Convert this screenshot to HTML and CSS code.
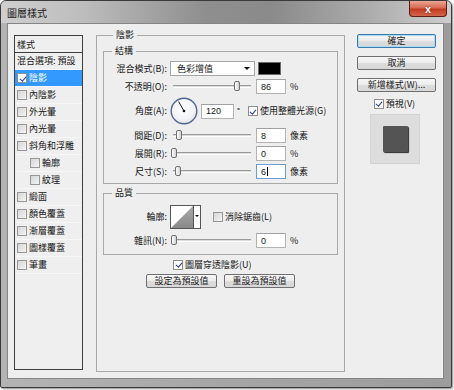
FILE: index.html
```html
<!DOCTYPE html>
<html lang="zh-Hant">
<head>
  <meta charset="utf-8">
  <title>圖層樣式</title>
  <link rel="stylesheet" href="styles.css">
</head>
<body>
  <div class="window">
    <div class="titlebar">
      <span class="title">圖層樣式</span>
      <button class="close-btn" aria-label="關閉">x</button>
    </div>
    <div class="frame">
      <div class="client">

        <div class="sidebar">
          <div class="side-head">樣式</div>
          <div class="side-item">混合選項: 預設</div>
          <div class="side-item selected"><span class="cb on"></span>陰影</div>
          <div class="side-item"><span class="cb"></span>內陰影</div>
          <div class="side-item"><span class="cb"></span>外光暈</div>
          <div class="side-item"><span class="cb"></span>內光暈</div>
          <div class="side-item"><span class="cb"></span>斜角和浮雕</div>
          <div class="side-item sub"><span class="cb"></span>輪廓</div>
          <div class="side-item sub"><span class="cb"></span>紋理</div>
          <div class="side-item"><span class="cb"></span>緞面</div>
          <div class="side-item"><span class="cb"></span>顏色覆蓋</div>
          <div class="side-item"><span class="cb"></span>漸層覆蓋</div>
          <div class="side-item"><span class="cb"></span>圖樣覆蓋</div>
          <div class="side-item"><span class="cb"></span>筆畫</div>
        </div>

        <fieldset class="group main-group">
          <legend>陰影</legend>

          <fieldset class="group sub-group structure">
            <legend>結構</legend>

            <div class="row">
              <span class="lbl">混合模式(B):</span>
              <div class="select"><span>色彩增值</span><span class="arrow"></span></div>
              <span class="swatch"></span>
            </div>

            <div class="row">
              <span class="lbl">不透明(O):</span>
              <div class="slider"><div class="track"></div><span class="thumb" style="left: 67px"></span></div>
              <span class="field">86</span>
              <span class="unit">%</span>
            </div>

            <div class="row angle-row">
              <span class="lbl">角度(A):</span>
              <svg class="dial" width="28" height="28" viewBox="0 0 28 28">
                <defs>
                  <radialGradient id="dialFill" cx="45%" cy="40%" r="65%">
                    <stop offset="0" stop-color="#ffffff"/>
                    <stop offset="0.7" stop-color="#f1f2f5"/>
                    <stop offset="1" stop-color="#d9dce4"/>
                  </radialGradient>
                </defs>
                <circle cx="14" cy="14" r="12.8" fill="url(#dialFill)" stroke="#53668f" stroke-width="1.4"/>
                <line x1="14" y1="14" x2="8.6" y2="4.6" stroke="#111" stroke-width="1"/>
                <circle cx="14" cy="14" r="1.3" fill="#111"/>
              </svg>
              <span class="field angle-field">120</span>
              <span class="degree">°</span>
              <span class="cb on global-cb"></span>
              <span class="cb-text">使用整體光源(G)</span>
            </div>

            <div class="row">
              <span class="lbl">間距(D):</span>
              <div class="slider"><div class="track"></div><span class="thumb" style="left: 9px"></span></div>
              <span class="field">8</span>
              <span class="unit">像素</span>
            </div>

            <div class="row">
              <span class="lbl">展開(R):</span>
              <div class="slider"><div class="track"></div><span class="thumb" style="left: 4px"></span></div>
              <span class="field">0</span>
              <span class="unit">%</span>
            </div>

            <div class="row">
              <span class="lbl">尺寸(S):</span>
              <div class="slider"><div class="track"></div><span class="thumb" style="left: 8px"></span></div>
              <span class="field focused">6<span class="caret"></span></span>
              <span class="unit">像素</span>
            </div>
          </fieldset>

          <fieldset class="group sub-group quality">
            <legend>品質</legend>

            <div class="row contour-row">
              <span class="lbl">輪廓:</span>
              <div class="contour">
                <svg class="contour-curve" width="22" height="22" viewBox="0 0 22 22">
                  <defs>
                    <linearGradient id="contourFill" x1="0" y1="0" x2="0" y2="1">
                      <stop offset="0" stop-color="#a8a8a8"/>
                      <stop offset="1" stop-color="#8a8a8a"/>
                    </linearGradient>
                  </defs>
                  <rect width="22" height="22" fill="#fff"/>
                  <polygon points="0,22 22,0 22,22" fill="url(#contourFill)"/>
                </svg>
                <span class="contour-drop"><span class="arrow small"></span></span>
              </div>
              <span class="cb aa-cb"></span>
              <span class="cb-text">消除鋸齒(L)</span>
            </div>

            <div class="row">
              <span class="lbl">雜訊(N):</span>
              <div class="slider"><div class="track"></div><span class="thumb" style="left: 4px"></span></div>
              <span class="field">0</span>
              <span class="unit">%</span>
            </div>
          </fieldset>

          <div class="knockout-row">
            <span class="cb on"></span>
            <span class="cb-text">圖層穿透陰影(U)</span>
          </div>

          <div class="default-row">
            <button class="btn">設定為預設值</button>
            <button class="btn">重設為預設值</button>
          </div>
        </fieldset>

        <div class="actions">
          <button class="btn btn-default">確定</button>
          <button class="btn">取消</button>
          <button class="btn">新增樣式(W)...</button>
          <div class="preview-toggle">
            <span class="cb on"></span>
            <span class="cb-text">預視(V)</span>
          </div>
          <div class="preview-box">
            <div class="preview-square"></div>
          </div>
        </div>

      </div>
    </div>
  </div>
</body>
</html>
```

FILE: styles.css
```css
* {
  box-sizing: border-box;
}

body {
  margin: 0;
  width: 454px;
  height: 390px;
  background: #ffffff;
  font-family: "Noto Sans CJK TC", "Liberation Sans", sans-serif;
  font-size: 9px;
  line-height: 12px;
  color: #161616;
}

.window {
  width: 452px;
  height: 388px;
  border: 1px solid #3a3a3a;
  border-radius: 6px 6px 2px 2px;
  background: linear-gradient(90deg, #b4b4b4, #a6a6a6 50%, #9c9c9c);
  box-shadow: 1px 1px 2px rgba(0, 0, 0, 0.45);
  overflow: hidden;
}

.titlebar {
  height: 22px;
  display: flex;
  justify-content: space-between;
  align-items: flex-start;
  padding: 0 4px 0 6px;
  background: linear-gradient(90deg, #cfcfcf, #bdbdbd 18%, #8f8f8f 45%, #8a8a8a 60%, #a9a9a9 80%, #cdcdcd);
}

.title {
  padding-top: 6px;
  font-size: 10px;
  color: #1a1a1a;
}

.close-btn {
  width: 38px;
  height: 16px;
  margin: 0;
  padding: 0;
  border: 1px solid #5e1d12;
  border-top: none;
  border-radius: 0 0 4px 4px;
  background: linear-gradient(#e9a797, #d86a52 45%, #c23a22 55%, #d2664c);
  color: #ffffff;
  font-family: "Liberation Sans", sans-serif;
  font-size: 11px;
  font-weight: bold;
  line-height: 14px;
  text-shadow: 0 0 2px #6b1f10;
}

.frame {
  padding: 0 7px 7px 6px;
}

.client {
  width: 437px;
  height: 356px;
  border: 1px solid #858585;
  background: #eeeeee;
  display: flex;
  align-items: flex-start;
  padding: 11px 0 0 6px;
}

/* left style list */
.sidebar {
  width: 69px;
  height: 335px;
  flex-shrink: 0;
  border: 1px solid #3e3e3e;
  background: #efefef;
}

.side-head {
  height: 17px;
  padding: 3px 0 0 2px;
  border-bottom: 1px solid #3e3e3e;
}

.side-item {
  height: 17px;
  display: flex;
  align-items: center;
  padding-left: 2px;
  border-bottom: 1px solid #f7f7f7;
  white-space: nowrap;
}

.side-item.sub {
  padding-left: 15px;
}

.side-item.selected {
  background: #3399ff;
  color: #ffffff;
}

.side-item .cb {
  margin-right: 2px;
}

/* checkboxes */
.cb {
  position: relative;
  display: inline-block;
  width: 10px;
  height: 10px;
  flex-shrink: 0;
  border: 1px solid #979797;
  background: linear-gradient(135deg, #d6d6d6, #f4f4f4);
}

.cb.on {
  border-color: #8e8f8f;
  background: #ffffff;
}

.cb.on::after {
  content: "";
  position: absolute;
  left: 2.5px;
  top: 0.5px;
  width: 2.5px;
  height: 5px;
  border-right: 1.5px solid #21409a;
  border-bottom: 1.5px solid #21409a;
  transform: rotate(40deg);
}

.cb-text {
  margin-left: 2px;
  white-space: nowrap;
}

/* fieldsets */
.group {
  margin: 0;
  border: 1px solid #a9a9a9;
  min-width: 0;
}

.group legend {
  padding: 0 3px;
  line-height: 12px;
}

.main-group {
  width: 249px;
  height: 343px;
  margin-left: 13px;
  margin-top: -6px;
  padding: 4px 6px 0 6px;
}

.main-group > legend {
  margin-left: 10px;
}

.sub-group {
  width: 235px;
  padding: 4px 4px 4px 0;
}

.sub-group > legend {
  margin-left: 8px;
}

.structure {
  display: flex;
  flex-direction: column;
  gap: 3px;
}

.quality {
  margin-top: 3px;
  padding-top: 6px;
  padding-bottom: 6px;
  display: flex;
  flex-direction: column;
  gap: 4px;
}

.row {
  display: flex;
  align-items: center;
  height: 15px;
}

.lbl {
  width: 63px;
  margin-right: 3px;
  text-align: right;
  white-space: nowrap;
}

.select {
  width: 85px;
  height: 15px;
  display: flex;
  justify-content: space-between;
  align-items: center;
  padding: 0 4px 0 6px;
  border: 1px solid #a7a7a7;
  background: #ffffff;
}

.arrow {
  width: 0;
  height: 0;
  border-left: 3px solid transparent;
  border-right: 3px solid transparent;
  border-top: 3px solid #111111;
}

.arrow.small {
  border-left-width: 2px;
  border-right-width: 2px;
  border-top-width: 2px;
}

.swatch {
  width: 23px;
  height: 13px;
  margin-left: 3px;
  border: 1px solid #6a6a6a;
  background: #000000;
}

.slider {
  position: relative;
  width: 84px;
  height: 15px;
}

.track {
  margin: 6px 3px 0;
  height: 3px;
  border-top: 1px solid #9a9a9a;
  border-bottom: 1px solid #ffffff;
  background: #dcdcdc;
}

.thumb {
  position: absolute;
  top: 2px;
  width: 6px;
  height: 10px;
  margin-left: -3px;
  border: 1px solid #6f6f6f;
  border-radius: 2px;
  background: linear-gradient(90deg, #ffffff, #d2d2d2);
}

.field {
  width: 30px;
  height: 15px;
  margin-left: 2px;
  padding-left: 4px;
  border: 1px solid #b3b3b3;
  border-top-color: #a0a0a0;
  background: #ffffff;
  display: flex;
  align-items: center;
  font-family: "Liberation Sans", sans-serif;
  font-size: 9px;
}

.field.focused {
  border-color: #6b9bd6;
}

.caret {
  width: 1px;
  height: 9px;
  margin-left: 1px;
  background: #000000;
}

.unit {
  margin-left: 4px;
  white-space: nowrap;
}

.angle-row {
  height: 28px;
}

.dial {
  flex-shrink: 0;
}

.angle-field {
  width: 33px;
  margin-left: 3px;
}

.degree {
  margin-left: 3px;
  font-size: 8px;
}

.global-cb {
  margin-left: 8px;
}

.contour-row {
  height: 24px;
}

.contour {
  width: 31px;
  height: 24px;
  display: flex;
  border: 1px solid #555555;
  background: #ffffff;
}

.contour-curve {
  display: block;
}

.contour-drop {
  width: 7px;
  border-left: 1px solid #555555;
  display: flex;
  justify-content: center;
  padding-top: 9px;
}

.aa-cb {
  margin-left: 12px;
}

.knockout-row {
  display: flex;
  align-items: center;
  height: 11px;
  margin: 4px 0 0 70px;
}

.default-row {
  display: flex;
  justify-content: center;
  gap: 7px;
  margin-top: 4px;
}

/* buttons */
.btn {
  height: 14px;
  margin: 0;
  padding: 0;
  border: 1px solid #6f6f6f;
  border-radius: 2px;
  background: linear-gradient(#f7f7f7, #ececec 48%, #dcdcdc 52%, #d8d8d8);
  font-family: inherit;
  font-size: 9px;
  line-height: 12px;
  color: #1c1c1c;
}

.default-row .btn {
  width: 71px;
}

.actions {
  width: 79px;
  margin-left: 12px;
  margin-top: -1px;
  display: flex;
  flex-direction: column;
  align-items: stretch;
}

.actions .btn {
  margin-bottom: 8px;
}

.btn-default {
  border-color: #3d7bad;
  box-shadow: inset 0 0 0 1px #a6dcf5;
}

.preview-toggle {
  display: flex;
  align-items: center;
  justify-content: center;
  height: 11px;
  margin-top: -2px;
  padding-right: 4px;
}

.preview-box {
  width: 50px;
  height: 50px;
  margin: 5px 0 0 13px;
  border: 1px solid #d2d2d2;
  background: #dddddd;
  display: flex;
  align-items: center;
  justify-content: center;
}

.preview-square {
  width: 25px;
  height: 26px;
  border-radius: 1px;
  background: #545454;
  box-shadow: 1px 1px 1px #2a2a2a;
}
```
